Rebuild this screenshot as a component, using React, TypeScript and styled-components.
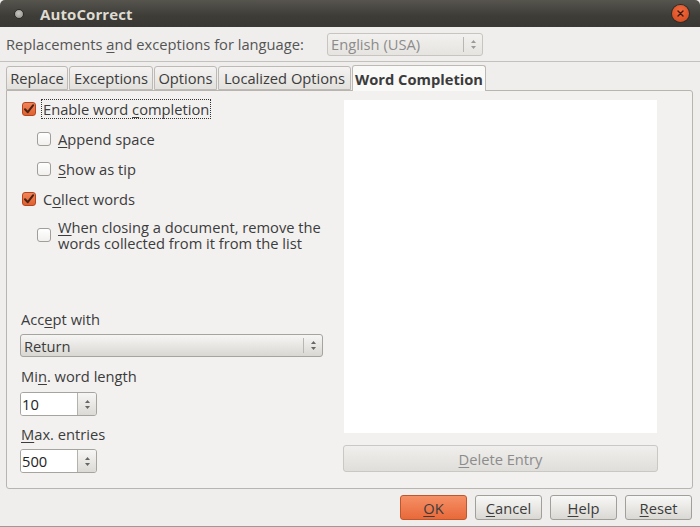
import styled, { createGlobalStyle } from 'styled-components';

const GlobalStyle = createGlobalStyle`
  html, body {
    margin: 0;
    padding: 0;
    background: #efeeec;
  }
  body {
    font-family: "Open Sans", "DejaVu Sans", sans-serif;
    font-size: 14.7px;
    color: #3c3c3c;
  }
  u {
    text-decoration: underline;
    text-underline-offset: 2px;
  }
`;

const Window = styled.div`
  width: 700px;
  height: 527px;
  display: flex;
  flex-direction: column;
  background: #efeeec;
  box-sizing: border-box;
  border-bottom: 1px solid #9c9a96;
  overflow: hidden;
`;

const TitleBar = styled.div`
  height: 27px;
  flex: none;
  display: flex;
  align-items: center;
  padding: 0 11px 0 14px;
  background: linear-gradient(#57544e, #3d3c37 60%, #393834);
  border-radius: 5px 5px 0 0;
`;

const WinIcon = styled.div`
  width: 8px;
  height: 8px;
  border-radius: 50%;
  background: radial-gradient(circle at 45% 40%, #c9c7c2, #8e8b86);
  border: 1px solid #2e2d2a;
  margin-right: 16px;
`;

const Title = styled.div`
  flex: 1;
  color: #dfdbd2;
  font-weight: bold;
  font-size: 15px;
  letter-spacing: 0.1px;
`;

const CloseButton = styled.div`
  width: 17px;
  height: 17px;
  border-radius: 50%;
  background: radial-gradient(circle at 50% 35%, #f26b3e, #d2461c);
  display: flex;
  align-items: center;
  justify-content: center;
  box-shadow: 0 0 0 1px #2e2d2a;
`;

const LangRow = styled.div`
  height: 34px;
  flex: none;
  display: flex;
  align-items: center;
  padding: 0 6px;
  border-bottom: 1px solid #c3c1bc;
`;

const LangLabel = styled.div`
  color: #555;
  width: 321px;
`;

const Combo = styled.div<{ $disabled?: boolean; $width: number }>`
  width: ${(p) => p.$width}px;
  height: 23px;
  box-sizing: border-box;
  display: flex;
  align-items: center;
  border: 1px solid ${(p) => (p.$disabled ? '#c8c5c0' : '#a6a49f')};
  border-radius: 3px;
  background: ${(p) =>
    p.$disabled ? 'linear-gradient(#f2f1ef, #e6e4e0)' : 'linear-gradient(#f6f6f5, #d9d7d2)'};
  color: ${(p) => (p.$disabled ? '#8c8c8c' : '#3c3c3c')};
  padding-left: 3px;
`;

const ComboText = styled.div`
  flex: 1;
`;

const ComboArrows = styled.div`
  width: 18px;
  height: 15px;
  border-left: 1px solid #b9b7b2;
  display: flex;
  align-items: center;
  justify-content: center;
`;

const TabStrip = styled.div`
  display: flex;
  align-items: flex-end;
  box-sizing: border-box;
  padding: 3px 6px 0;
  height: 28px;
  flex: none;
  position: relative;
  z-index: 1;
`;

const Tab = styled.div<{ $active?: boolean; $width: number }>`
  width: ${(p) => p.$width}px;
  height: ${(p) => (p.$active ? 26 : 24)}px;
  box-sizing: border-box;
  display: flex;
  align-items: center;
  justify-content: center;
  margin-right: 1px;
  border: 1px solid #bdbab5;
  border-bottom: ${(p) => (p.$active ? 'none' : '1px solid #bdbab5')};
  border-radius: 3px 3px 0 0;
  background: ${(p) => (p.$active ? '#f9f9f8' : 'linear-gradient(#f4f3f2, #e3e1dd)')};
  font-weight: ${(p) => (p.$active ? 'bold' : 'normal')};
  white-space: nowrap;
  margin-bottom: ${(p) => (p.$active ? -1 : 0)}px;
`;

const Panel = styled.div`
  margin: 0 7px 0 6px;
  height: 399px;
  box-sizing: border-box;
  border: 1px solid #b8b5b0;
  border-radius: 0 3px 3px 3px;
  background: #f2f1f0;
  display: flex;
  padding: 9px 34px 15px 13px;
  gap: 20px;
`;

const LeftCol = styled.div`
  width: 303px;
  margin-top: -6px;
  display: flex;
  flex-direction: column;
`;

const CheckRow = styled.div<{ $indent?: boolean; $tall?: boolean }>`
  display: flex;
  align-items: center;
  min-height: 30px;
  padding-left: ${(p) => (p.$indent ? 17 : 2)}px;
  margin-top: ${(p) => (p.$tall ? 4 : 0)}px;
`;

const Box = styled.div<{ $checked?: boolean }>`
  width: 14px;
  height: 14px;
  flex: none;
  box-sizing: border-box;
  border-radius: 3px;
  border: 1px solid ${(p) => (p.$checked ? '#b4451f' : '#a09e99')};
  background: ${(p) =>
    p.$checked ? 'linear-gradient(#f2845a, #e0612f)' : 'linear-gradient(#ffffff, #f1f0ee)'};
  display: flex;
  align-items: center;
  justify-content: center;
  margin-right: 7px;
`;

const CheckLabel = styled.div<{ $focus?: boolean }>`
  line-height: 16px;
  padding: 1px 1px;
  outline: ${(p) => (p.$focus ? '1px dotted #333' : 'none')};
  margin-left: -1px;
`;

const Line = styled.span`
  display: block;
  height: 16px;
  white-space: nowrap;
`;

const Spacer = styled.div`
  flex: 1;
`;

const FieldLabel = styled.div<{ $top: number }>`
  margin-top: ${(p) => p.$top}px;
  line-height: 18px;
  padding-left: 1px;
`;

const FieldGap = styled.div<{ $h: number }>`
  height: ${(p) => p.$h}px;
`;

const Spin = styled.div`
  width: 77px;
  height: 24px;
  display: flex;
  box-sizing: border-box;
  border: 1px solid #a6a49f;
  border-radius: 3px;
  overflow: hidden;
`;

const SpinInput = styled.div`
  flex: 1;
  background: #fff;
  display: flex;
  align-items: center;
  padding-left: 1px;
  color: #222;
`;

const SpinButtons = styled.div`
  width: 18px;
  border-left: 1px solid #b4b2ad;
  background: linear-gradient(#f6f6f5, #dcdad5);
  display: flex;
  align-items: center;
  justify-content: center;
`;

const RightCol = styled.div`
  width: 315px;
  display: flex;
  flex-direction: column;
`;

const ListBox = styled.div`
  height: 333px;
  margin-left: 1px;
  margin-right: 1px;
  background: #fff;
`;

const DeleteButton = styled.div`
  margin-top: 12px;
  height: 27px;
  box-sizing: border-box;
  border: 1px solid #cac8c3;
  border-radius: 3px;
  background: linear-gradient(#f0efed, #e0deda);
  color: #8c8c8c;
  display: flex;
  align-items: center;
  justify-content: center;
`;

const ButtonRow = styled.div`
  flex: 1;
  display: flex;
  justify-content: flex-end;
  align-items: center;
  gap: 8px;
  padding: 0 8px 0 0;
`;

const DialogButton = styled.div<{ $primary?: boolean }>`
  width: 67px;
  height: 25px;
  box-sizing: border-box;
  border-radius: 3px;
  border: 1px solid ${(p) => (p.$primary ? '#c1562c' : '#a19f9a')};
  background: ${(p) =>
    p.$primary ? 'linear-gradient(#f59066, #e8693a)' : 'linear-gradient(#f8f8f7, #dad8d3)'};
  display: flex;
  align-items: center;
  justify-content: center;
  color: #3c3c3c;
`;

const Arrows = ({ color = '#666' }: { color?: string }) => (
  <svg width="7" height="11" viewBox="0 0 7 11">
    <path d="M3.5 1 L6 4 H1 Z" fill={color} />
    <path d="M3.5 10 L6 7 H1 Z" fill={color} />
  </svg>
);

const CheckMark = () => (
  <svg width="12" height="12" viewBox="0 0 12 12">
    <path d="M2 6.2 L4.8 9.2 L10.2 2.2" fill="none" stroke="#4a2414" strokeWidth="2" strokeLinecap="round" strokeLinejoin="round" />
  </svg>
);

function Check({
  checked,
  indent,
  focus,
  tall,
  children,
}: {
  checked?: boolean;
  indent?: boolean;
  focus?: boolean;
  tall?: boolean;
  children: React.ReactNode;
}) {
  return (
    <CheckRow $indent={indent} $tall={tall}>
      <Box $checked={checked}>{checked && <CheckMark />}</Box>
      <CheckLabel $focus={focus}>{children}</CheckLabel>
    </CheckRow>
  );
}

export default function App() {
  return (
    <>
      <GlobalStyle />
      <Window>
        <TitleBar>
          <WinIcon />
          <Title>AutoCorrect</Title>
          <CloseButton>
            <svg width="7" height="7" viewBox="0 0 7 7">
              <path d="M1 1 L6 6 M6 1 L1 6" stroke="#3a1a0c" strokeWidth="1.4" strokeLinecap="round" />
            </svg>
          </CloseButton>
        </TitleBar>

        <LangRow>
          <LangLabel>
            Replacements <u>a</u>nd exceptions for language:
          </LangLabel>
          <Combo $disabled $width={156}>
            <ComboText>English (USA)</ComboText>
            <ComboArrows>
              <Arrows color="#9a9a9a" />
            </ComboArrows>
          </Combo>
        </LangRow>

        <TabStrip>
          <Tab $width={62}>Replace</Tab>
          <Tab $width={84}>Exceptions</Tab>
          <Tab $width={63}>Options</Tab>
          <Tab $width={133}>Localized Options</Tab>
          <Tab $active $width={134}>
            Word Completion
          </Tab>
        </TabStrip>

        <Panel>
          <LeftCol>
            <Check checked focus>
              Enable word <u>c</u>ompletion
            </Check>
            <Check indent>
              <u>A</u>ppend space
            </Check>
            <Check indent>
              <u>S</u>how as tip
            </Check>
            <Check checked>
              C<u>o</u>llect words
            </Check>
            <Check indent tall>
              <Line>
                <u>W</u>hen closing a document, remove the
              </Line>
              <Line>words collected from it from the list</Line>
            </Check>
            <Spacer />
            <FieldLabel $top={0}>
              Acc<u>e</u>pt with
            </FieldLabel>
            <FieldGap $h={6} />
            <Combo $width={303}>
              <ComboText>Return</ComboText>
              <ComboArrows>
                <Arrows />
              </ComboArrows>
            </Combo>
            <FieldLabel $top={10}>
              Mi<u>n</u>. word length
            </FieldLabel>
            <FieldGap $h={7} />
            <Spin>
              <SpinInput>10</SpinInput>
              <SpinButtons>
                <Arrows />
              </SpinButtons>
            </Spin>
            <FieldLabel $top={9}>
              <u>M</u>ax. entries
            </FieldLabel>
            <FieldGap $h={6} />
            <Spin>
              <SpinInput>500</SpinInput>
              <SpinButtons>
                <Arrows />
              </SpinButtons>
            </Spin>
          </LeftCol>

          <RightCol>
            <ListBox />
            <DeleteButton>
              <span>
                <u>D</u>elete Entry
              </span>
            </DeleteButton>
          </RightCol>
        </Panel>

        <ButtonRow>
          <DialogButton $primary>
            <span>
              <u>O</u>K
            </span>
          </DialogButton>
          <DialogButton>
            <span>
              <u>C</u>ancel
            </span>
          </DialogButton>
          <DialogButton>
            <span>
              <u>H</u>elp
            </span>
          </DialogButton>
          <DialogButton>
            <span>
              <u>R</u>eset
            </span>
          </DialogButton>
        </ButtonRow>
      </Window>
    </>
  );
}
